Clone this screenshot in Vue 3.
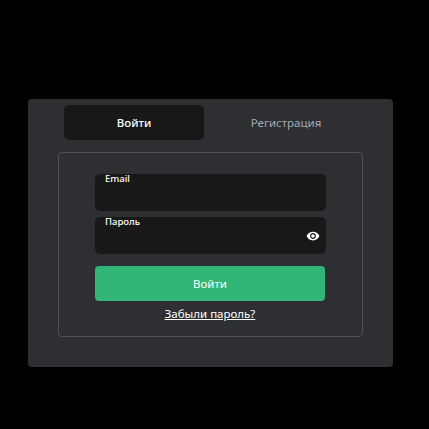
<script setup>
const fields = [
  { label: 'Email', icon: false },
  { label: 'Пароль', icon: true }
]
</script>

<template>
  <main class="page">
    <section class="card">
      <nav class="tabs">
        <button class="tab active">Войти</button>
        <button class="tab">Регистрация</button>
      </nav>
      <form class="box" @submit.prevent>
        <div v-for="f in fields" :key="f.label" class="field">
          <label class="label">{{ f.label }}</label>
          <svg v-if="f.icon" class="eye" viewBox="0 0 24 24" width="14" height="14">
            <path fill="#fff" d="M12 4.5C7 4.5 2.73 7.61 1 12c1.73 4.39 6 7.5 11 7.5s9.27-3.11 11-7.5c-1.73-4.39-6-7.5-11-7.5zM12 17c-2.76 0-5-2.24-5-5s2.24-5 5-5 5 2.24 5 5-2.24 5-5 5zm0-8c-1.66 0-3 1.34-3 3s1.34 3 3 3 3-1.34 3-3-1.34-3-3-3z"/>
          </svg>
        </div>
        <button class="submit">Войти</button>
        <a class="forgot" href="#">Забыли пароль?</a>
      </form>
    </section>
  </main>
</template>

<style>
html, body { background: #000; margin: 0; }
</style>

<style scoped>
.page {
  height: 429px;
  box-sizing: border-box;
  padding: 99px 36px 0 28px;
  font-family: "Noto Sans", "Open Sans", sans-serif;
}
.card {
  width: 365px;
  height: 268px;
  box-sizing: border-box;
  padding: 6px 30px 0;
  background: #2e2f33;
  border-radius: 4px;
}
.tabs {
  display: flex;
  gap: 12px;
  padding-left: 6px;
  margin-bottom: 12px;
}
.tab {
  width: 140px;
  height: 35px;
  padding: 0;
  border: 0;
  border-radius: 5px;
  background: transparent;
  color: #a3a9b3;
  font: 400 11.5px "Noto Sans", sans-serif;
}
.tab.active {
  background: #181818;
  color: #fff;
  font-weight: 500;
}
.box {
  width: 305px;
  height: 185px;
  box-sizing: border-box;
  padding: 21px 36px 0;
  border: 1px solid #505156;
  border-radius: 4px;
  display: flex;
  flex-direction: column;
  align-items: flex-start;
}
.field {
  position: relative;
  width: 231px;
  height: 37px;
  margin-bottom: 6px;
  background: #181818;
  border-radius: 5px;
}
.label {
  position: absolute;
  left: 10px;
  top: -1px;
  color: #fff;
  font-size: 9.5px;
  font-weight: 500;
  line-height: 12px;
}
.eye {
  position: absolute;
  right: 6px;
  top: 12px;
}
.submit {
  width: 230px;
  height: 35px;
  margin-top: 6px;
  border: 0;
  padding: 0 0 1px;
  border-radius: 4px;
  background: #32b677;
  color: #fff;
  font: 400 11.5px "Noto Sans", sans-serif;
}
.forgot {
  width: 230px;
  margin-top: 5px;
  text-align: center;
  color: #fff;
  font-size: 11.5px;
  line-height: 16px;
  text-decoration: underline;
}
</style>
